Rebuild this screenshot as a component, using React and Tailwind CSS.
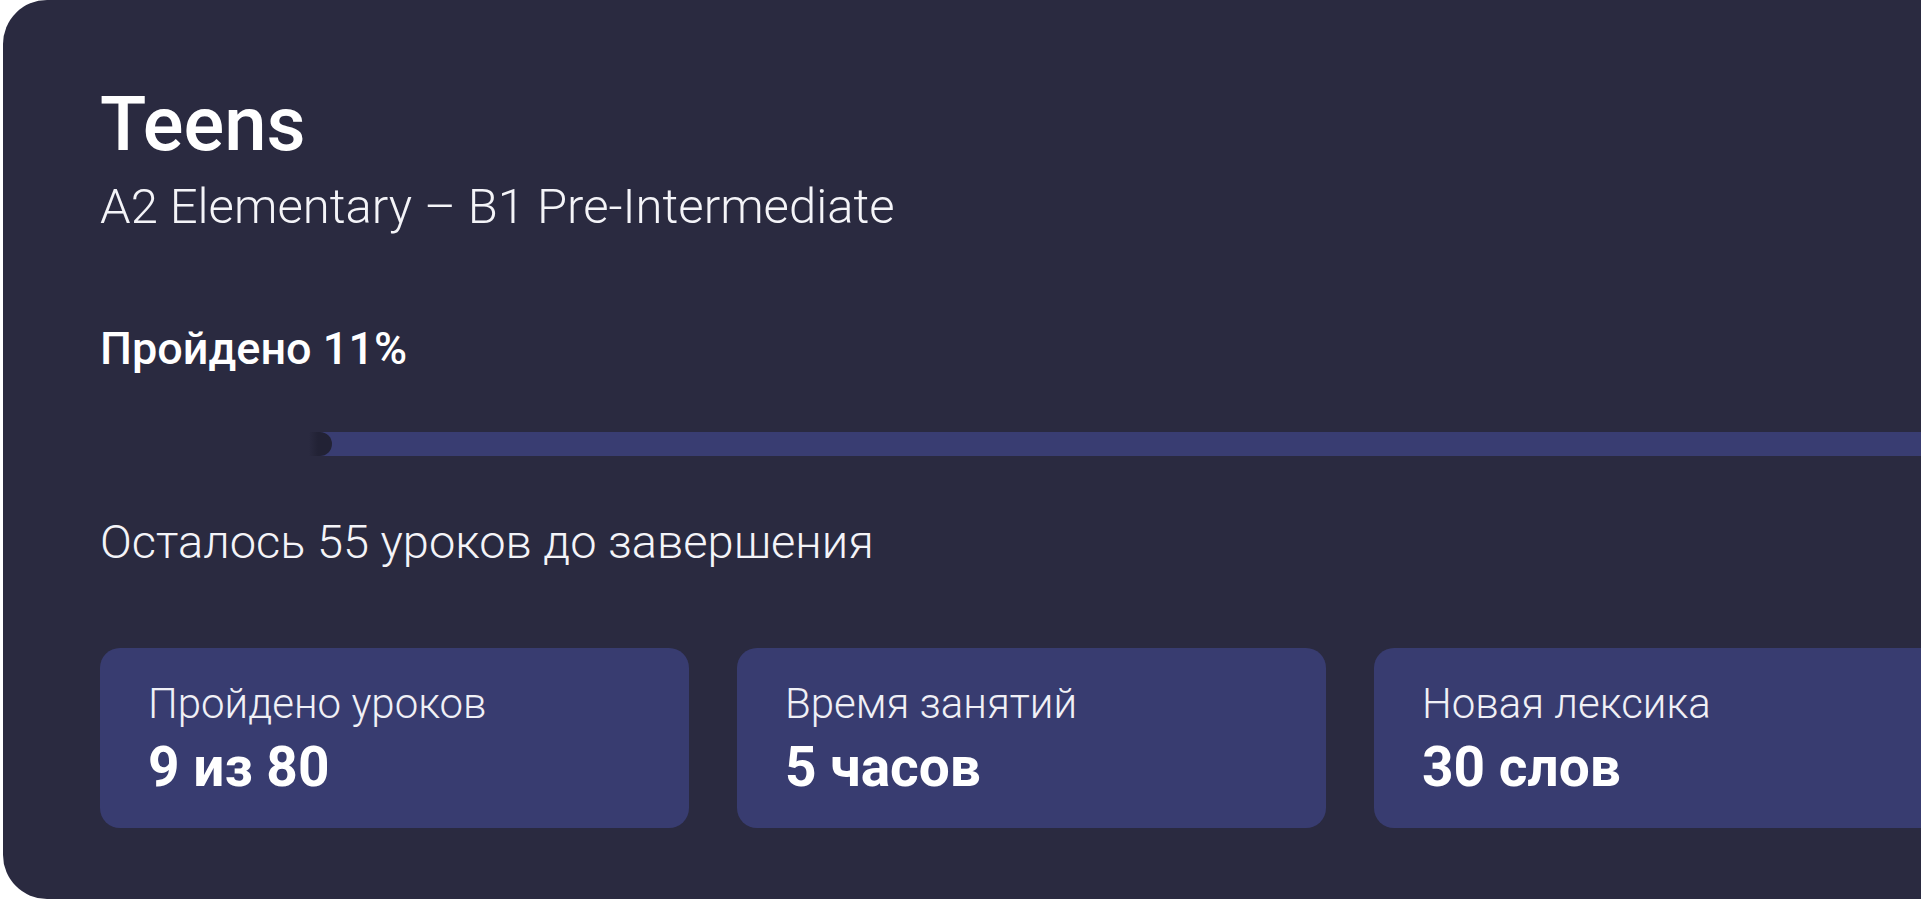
const stats = [
  { label: 'Пройдено уроков', value: '9 из 80' },
  { label: 'Время занятий', value: '5 часов' },
  { label: 'Новая лексика', value: '30 слов' },
]

export default function App() {
  const progress = 11

  return (
    <div className="w-[1921px] h-[900px] overflow-hidden bg-white pl-[3px] font-['Roboto',sans-serif] text-white">
      <div className="w-[2400px] h-[899px] rounded-[44px] bg-[#2a2a40] pl-[97px] pt-[86px]">
        {/* Course heading */}
        <h1 className="text-[76px] leading-none font-medium">Teens</h1>
        <p className="mt-[20px] text-[49px] leading-none font-light text-[#f4f4f8]">
          A2 Elementary – B1 Pre-Intermediate
        </p>

        {/* Progress */}
        <div className="mt-[95px] text-[45px] leading-none font-medium">Пройдено {progress}%</div>
        <div className="mt-[61px] h-[24px] w-[2200px] bg-[#393d72] flex">
          <div className="h-full w-[232px] rounded-r-full bg-[linear-gradient(to_right,#2a2a40_90%,#222235_94%)]" />
        </div>
        <p className="mt-[62px] text-[47px] leading-none font-light text-[#f4f4f8]">
          Осталось 55 уроков до завершения
        </p>

        {/* Stat cards */}
        <div className="mt-[83px] flex gap-[48px]">
          {stats.map((s) => (
            <div
              key={s.label}
              className="w-[589px] h-[180px] shrink-0 rounded-[20px] bg-[#383c70] pl-[48px] pt-[35px]"
            >
              <div className="text-[42px] leading-none font-light text-[#f0f0f6]">{s.label}</div>
              <div className="mt-[15px] text-[55px] leading-none font-bold">{s.value}</div>
            </div>
          ))}
        </div>
      </div>
    </div>
  )
}
